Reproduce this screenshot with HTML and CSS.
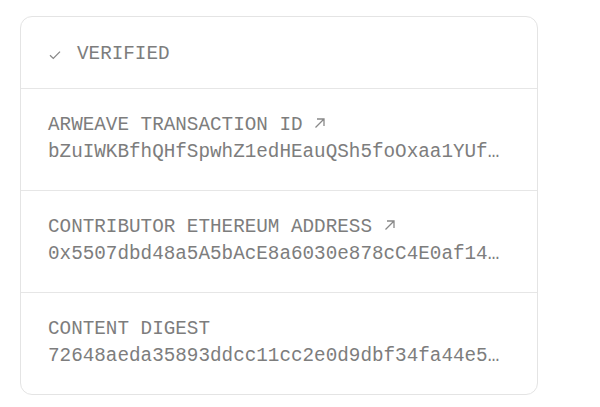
FILE: index.html
```html
<!DOCTYPE html>
<html>
<head>
<meta charset="utf-8">
<link rel="stylesheet" href="styles.css">
</head>
<body>
<div class="card">
  <div class="row head">
    <svg class="check" width="12" height="10" viewBox="0 0 12 10"><path d="M1 5.2 L4.3 8.4 L11 1.6" fill="none" stroke="#888" stroke-width="1.3"/></svg>
    <span>VERIFIED</span>
  </div>
  <div class="row">
    <div class="label">ARWEAVE TRANSACTION ID <svg class="arrow" width="12" height="12" viewBox="0 0 12 12"><path d="M1.5 10.5 L10 2 M3 2 H10 V9" fill="none" stroke="#888" stroke-width="1.3"/></svg></div>
    <div class="value">bZuIWKBfhQHfSpwhZ1edHEauQSh5foOxaa1YUfAbCdEf</div>
  </div>
  <div class="row">
    <div class="label">CONTRIBUTOR ETHEREUM ADDRESS <svg class="arrow" width="12" height="12" viewBox="0 0 12 12"><path d="M1.5 10.5 L10 2 M3 2 H10 V9" fill="none" stroke="#888" stroke-width="1.3"/></svg></div>
    <div class="value">0x5507dbd48a5A5bAcE8a6030e878cC4E0af14Ab12</div>
  </div>
  <div class="row">
    <div class="label">CONTENT DIGEST</div>
    <div class="value">72648aeda35893ddcc11cc2e0d9dbf34fa44e5b7c1d2</div>
  </div>
</div>
</body>
</html>
```
FILE: styles.css
```css
html, body {
  margin: 0;
  padding: 0;
  background: #fff;
}
body {
  font-family: "Liberation Mono", "DejaVu Sans Mono", monospace;
  font-size: 19.3px;
  line-height: 27px;
  color: #7d7d7d;
}
.card {
  margin: 16px 0 0 20px;
  width: 516px;
  border: 1px solid #e4e4e4;
  border-radius: 12px;
  overflow: hidden;
}
.row {
  padding: 23px 33px 24px 27px;
  border-top: 1px solid #e6e6e6;
}
.row:first-child {
  border-top: none;
}
.head {
  display: flex;
  align-items: center;
  gap: 16px;
  padding-top: 24px;
  padding-bottom: 20px;
}
.check {
  margin-left: 1px;
}
.label {
  white-space: nowrap;
}
.arrow {
  margin-left: 0;
  vertical-align: 1px;
}
.value {
  white-space: nowrap;
  overflow: hidden;
  text-overflow: ellipsis;
}
```
